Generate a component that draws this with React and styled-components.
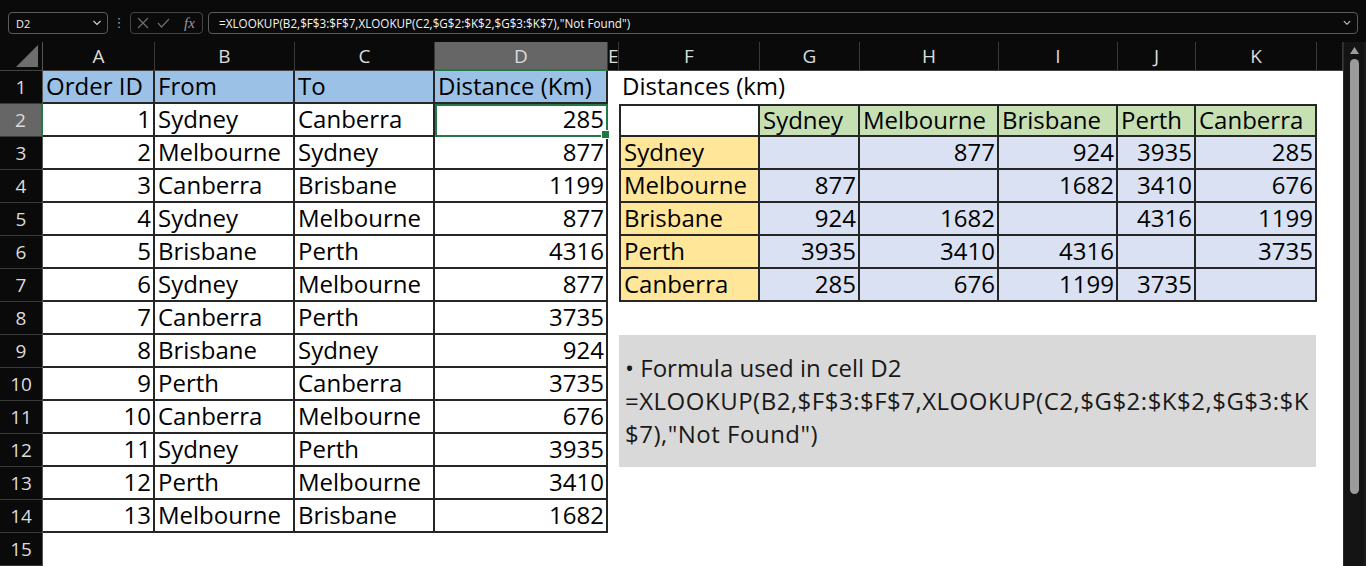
import React from 'react'
import styled, { createGlobalStyle } from 'styled-components'

const LINE = '2px solid #262626'
const GREEN = '#1f7a45'

const COLS = [
  { id: 'A', w: 112 },
  { id: 'B', w: 140 },
  { id: 'C', w: 140 },
  { id: 'D', w: 173 },
  { id: 'E', w: 11 },
  { id: 'F', w: 141 },
  { id: 'G', w: 100 },
  { id: 'H', w: 139 },
  { id: 'I', w: 119 },
  { id: 'J', w: 78 },
  { id: 'K', w: 121 },
]

const ORDERS = [
  [1, 'Sydney', 'Canberra', 285],
  [2, 'Melbourne', 'Sydney', 877],
  [3, 'Canberra', 'Brisbane', 1199],
  [4, 'Sydney', 'Melbourne', 877],
  [5, 'Brisbane', 'Perth', 4316],
  [6, 'Sydney', 'Melbourne', 877],
  [7, 'Canberra', 'Perth', 3735],
  [8, 'Brisbane', 'Sydney', 924],
  [9, 'Perth', 'Canberra', 3735],
  [10, 'Canberra', 'Melbourne', 676],
  [11, 'Sydney', 'Perth', 3935],
  [12, 'Perth', 'Melbourne', 3410],
  [13, 'Melbourne', 'Brisbane', 1682],
]

const CITIES = ['Sydney', 'Melbourne', 'Brisbane', 'Perth', 'Canberra']
const MATRIX = [
  ['', 877, 924, 3935, 285],
  [877, '', 1682, 3410, 676],
  [924, 1682, '', 4316, 1199],
  [3935, 3410, 4316, '', 3735],
  [285, 676, 1199, 3735, ''],
]

const GlobalStyle = createGlobalStyle`
  html, body {
    margin: 0;
    padding: 0;
    background: #0a0a0a;
    overflow: hidden;
  }
  * { box-sizing: border-box; }
`

const Page = styled.div`
  width: 1366px;
  height: 566px;
  background: #0a0a0a;
  font-family: "Open Sans", "Noto Sans", sans-serif;
  overflow: hidden;
`

// formula bar
const Bar = styled.div`
  height: 42px;
  display: flex;
  align-items: flex-start;
  padding: 12px 8px 0;
`

const NameBox = styled.div`
  width: 100px;
  height: 22px;
  border: 1px solid #5a5a5a;
  border-radius: 4px;
  display: flex;
  align-items: center;
  justify-content: space-between;
  padding: 0 5px 0 7px;
  color: #f2f2f2;
  font-size: 11px;
`

const Dots = styled.div`
  width: 22px;
  line-height: 22px;
  text-align: center;
  color: #a0a0a0;
  font-family: "DejaVu Sans", sans-serif;
  font-size: 13px;
`

const EditBox = styled.div`
  width: 73px;
  height: 22px;
  border: 1px solid #444;
  border-radius: 4px;
  display: flex;
  align-items: center;
  gap: 8px;
  padding-left: 6px;
  color: #6c6c6c;
`

const Fx = styled.span`
  font-family: "Liberation Serif", serif;
  font-style: italic;
  font-size: 15px;
  color: #9a9a9a;
  margin-left: 6px;
`

const Input = styled.div`
  flex: 1;
  margin-left: 5px;
  height: 22px;
  border: 1px solid #5a5a5a;
  border-radius: 4px;
  display: flex;
  align-items: center;
  justify-content: space-between;
  padding: 0 6px 0 10px;
  color: #f4f4f4;
  font-size: 11.7px;
  white-space: nowrap;
`

// sheet
const Workspace = styled.div`
  display: flex;
  height: 524px;
`

const Sheet = styled.div`
  flex: 1;
  display: grid;
  grid-template-columns: 43px ${COLS.map(c => c.w + 'px').join(' ')} 1fr;
  grid-template-rows: 29px repeat(15, 33px);
  background: #fff;
  overflow: hidden;
`

const Corner = styled.div`
  background: #0a0a0a;
  border-right: 1px solid #555;
  border-bottom: 1px solid #444;
  display: flex;
  align-items: flex-end;
  justify-content: flex-end;
  padding: 0 4px 3px 0;
`

const ColHead = styled.div`
  background: ${p => (p.$active ? '#666' : '#0a0a0a')};
  border-right: 1px solid #383838;
  border-bottom: ${p => (p.$active ? `2px solid ${GREEN}` : '1px solid #444')};
  color: #dcdcdc;
  font-size: 19px;
  line-height: 28px;
  text-align: center;
  overflow: hidden;
`

const RowHead = styled.div`
  background: ${p => (p.$active ? '#666' : '#0a0a0a')};
  border-bottom: 1px solid #383838;
  border-right: ${p => (p.$active ? `2px solid ${GREEN}` : '1px solid #555')};
  color: #dcdcdc;
  font-size: 19px;
  line-height: 32px;
  text-align: center;
`

const Cell = styled.div`
  position: relative;
  min-width: 0;
  padding: 0 2px 0 3px;
  font-size: 24px;
  line-height: ${p => (p.$top ? 27 : 29)}px;
  color: #000;
  white-space: nowrap;
  z-index: ${p => (p.$spill ? 1 : 'auto')};
  text-align: ${p => (p.$num ? 'right' : 'left')};
  background: ${p => p.$bg || (p.$spill ? 'transparent' : '#fff')};
  border-right: ${p => (p.$grid ? LINE : 'none')};
  border-bottom: ${p => (p.$grid ? LINE : 'none')};
  border-left: ${p => (p.$left ? LINE : 'none')};
  border-top: ${p => (p.$top ? LINE : 'none')};
  ${p =>
    p.$selected &&
    `
    outline: 2px solid ${GREEN};
    outline-offset: -2px;
    z-index: 2;
    &::after {
      content: '';
      position: absolute;
      right: -4px;
      bottom: -4px;
      width: 7px;
      height: 7px;
      background: ${GREEN};
      border: 1px solid #fff;
    }
  `}
`

const Note = styled.div`
  grid-column: span 6;
  grid-row: span 4;
  margin-right: 1px;
  background: #d9d9d9;
  padding: 16px 6px 0;
  font-size: 24px;
  line-height: 33px;
  color: #1a1a1a;
  white-space: nowrap;
`

const NoteLine = styled.div`
  letter-spacing: ${p => (p.$code ? '0.5px' : '0')};
`

const Scrollbar = styled.div`
  width: 23px;
  background: #141414;
  border-left: 1px solid #2c2c2c;
  border-right: 2px solid #1c1c1c;
  display: flex;
  flex-direction: column;
  align-items: center;
  padding-top: 5px;
`

const Thumb = styled.div`
  width: 9px;
  height: 435px;
  margin-top: 5px;
  border-radius: 5px;
  background: #9b9b9b;
`

const Chevron = ({ w = 9 }) => (
  <svg width={w} height="6" viewBox="0 0 9 6" fill="none" stroke="#d0d0d0" strokeWidth="1.2">
    <polyline points="1,1 4.5,4.5 8,1" />
  </svg>
)

function buildRow(r) {
  const cells = []
  const push = (key, props, text) =>
    cells.push(
      <Cell key={key} {...props}>
        {text}
      </Cell>
    )

  // left table: A..D
  if (r === 1) {
    ;['Order ID', 'From', 'To', 'Distance (Km)'].forEach((t, i) =>
      push('h' + i, { $grid: true, $bg: '#9bc2e6' }, t)
    )
  } else if (r <= 14) {
    const [id, from, to, dist] = ORDERS[r - 2]
    push('a', { $grid: true, $num: true }, id)
    push('b', { $grid: true }, from)
    push('c', { $grid: true }, to)
    push('d', { $grid: true, $num: true, $selected: r === 2 }, dist)
  } else {
    ;['a', 'b', 'c', 'd'].forEach(k => push(k, {}))
  }

  // E
  push('e', {})

  // right side: F..K
  if (r === 1) {
    push('f', { $spill: true }, 'Distances (km)')
    ;['g', 'h', 'i', 'j', 'k'].forEach(k => push(k, { $bg: 'transparent' }))
  } else if (r === 2) {
    push('f', { $grid: true, $left: true, $top: true })
    CITIES.forEach(c => push('g' + c, { $grid: true, $top: true, $bg: '#c6e0b4' }, c))
  } else if (r <= 7) {
    push('f', { $grid: true, $left: true, $bg: '#ffe699' }, CITIES[r - 3])
    MATRIX[r - 3].forEach((v, i) => push('v' + i, { $grid: true, $num: true, $bg: '#d9e1f2' }, v))
  } else if (r === 9) {
    cells.push(
      <Note key="note">
        <NoteLine>• Formula used in cell D2</NoteLine>
        <NoteLine $code>=XLOOKUP(B2,$F$3:$F$7,XLOOKUP(C2,$G$2:$K$2,$G$3:$K</NoteLine>
        <NoteLine $code>$7),"Not Found")</NoteLine>
      </Note>
    )
  } else if (r < 10 || r > 12) {
    ;['f', 'g', 'h', 'i', 'j', 'k'].forEach(k => push(k, {}))
  }

  // L
  push('l', {})
  return cells
}

export default function App() {
  const rows = Array.from({ length: 15 }, (_, i) => i + 1)
  return (
    <Page>
      <GlobalStyle />
      <Bar>
        <NameBox>
          <span>D2</span>
          <Chevron w={10} />
        </NameBox>
        <Dots>⋮</Dots>
        <EditBox>
          <svg width="12" height="12" viewBox="0 0 12 12" stroke="#6c6c6c" strokeWidth="1.2">
            <line x1="1" y1="1" x2="11" y2="11" />
            <line x1="11" y1="1" x2="1" y2="11" />
          </svg>
          <svg width="13" height="10" viewBox="0 0 13 10" fill="none" stroke="#6c6c6c" strokeWidth="1.2">
            <polyline points="1,5 4.5,9 12,1" />
          </svg>
          <Fx>fx</Fx>
        </EditBox>
        <Input>
          <span>=XLOOKUP(B2,$F$3:$F$7,XLOOKUP(C2,$G$2:$K$2,$G$3:$K$7),"Not Found")</span>
          <Chevron w={8} />
        </Input>
      </Bar>
      <Workspace>
        <Sheet>
          <Corner>
            <svg width="22" height="22" viewBox="0 0 22 22">
              <polygon points="22,0 22,22 0,22" fill="#6e6e6e" />
            </svg>
          </Corner>
          {COLS.map(c => (
            <ColHead key={c.id} $active={c.id === 'D'}>
              {c.id}
            </ColHead>
          ))}
          <ColHead />
          {rows.map(r => (
            <React.Fragment key={r}>
              <RowHead $active={r === 2}>{r}</RowHead>
              {buildRow(r)}
            </React.Fragment>
          ))}
        </Sheet>
        <Scrollbar>
          <svg width="9" height="7" viewBox="0 0 9 7">
            <polygon points="4.5,0 9,7 0,7" fill="#9b9b9b" />
          </svg>
          <Thumb />
        </Scrollbar>
      </Workspace>
    </Page>
  )
}
